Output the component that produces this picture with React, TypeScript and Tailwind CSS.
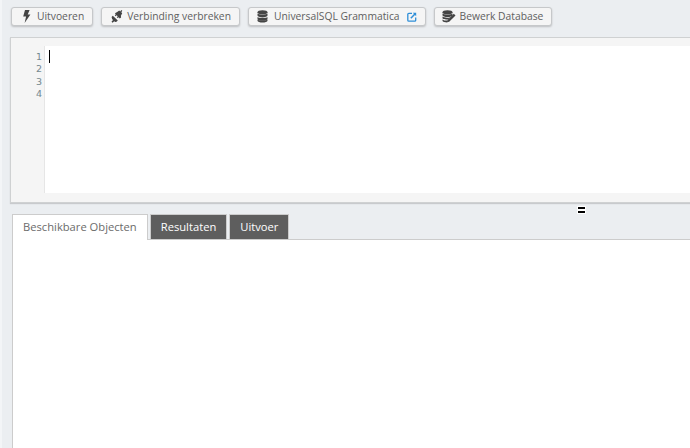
import type { ReactNode } from "react";

function BoltIcon() {
  return (
    <svg width="9" height="13" viewBox="0 0 9 13" fill="#444">
      <path d="M3 0h4.600L5.700 4.400H8.400L2.600 13l1.500-6.600H1.200z" />
    </svg>
  );
}

function UnplugIcon() {
  return (
    <svg width="15" height="15" viewBox="0 0 15 15" fill="#444">
      {/* upper plug */}
      <path d="M8.200 2.900l2-1.300 1.100.9.900-1.500 1.100.8-1 1.500.9 1-1.300 2.400.2 1.700-1.400 1.100-1-1.300-1 .9-.9-.9 1-1-1.200-1-1 1-.8-.9 1-1-.9-1z" />
      {/* lower plug */}
      <path d="M2.600 8l1.200-1.200 5 4.700-1.300 1.300-1.300.3-1-.9-1.600 1.500-1.100-1 1.500-1.600-.9-1z" />
    </svg>
  );
}

function DatabaseIcon() {
  return (
    <svg width="11" height="13" viewBox="0 0 11 13" fill="#444">
      <ellipse cx="5.500" cy="2.200" rx="5" ry="2" />
      <path d="M.5 3.600c1 1.300 9 1.300 10 0V5.600c0 2.400-10 2.400-10 0z" />
      <path d="M.5 7c1 1.300 9 1.300 10 0v2c0 2.400-10 2.400-10 0z" />
      <path d="M.5 9.600c1 1.300 9 1.300 10 0v1.200c0 2.400-10 2.400-10 0z" />
    </svg>
  );
}

function DatabaseEditIcon() {
  return (
    <svg width="14" height="13" viewBox="0 0 14 13" fill="#444">
      <ellipse cx="5.500" cy="2.200" rx="5" ry="2" />
      <path d="M.5 3.600c1 1.300 9 1.300 10 0v1.600c0 2.400-10 2.400-10 0z" />
      <path d="M.5 6.600c1 1.300 6 1.400 8 .6L6 9.600c-2.600 0-5.500-.4-5.500-1.500z" />
      <path d="M.5 9.400c1 1 3.500 1.200 5 1.100l-.3 2c-2.200 0-4.700-.5-4.700-1.700z" />
      <path d="M11.800 3.800l1.700 1.600-6.300 6.300-2.300.6.600-2.300z" />
    </svg>
  );
}

function ExternalIcon() {
  return (
    <svg width="10" height="10" viewBox="0 0 10 10" fill="none" stroke="#2f8fd8" strokeWidth="1.300">
      <path d="M5 1.300H1.800a1 1 0 0 0-1 1v5.900a1 1 0 0 0 1 1h5.900a1 1 0 0 0 1-1V5.500" />
      <path d="M3.800 6.200l4.400-4.400" strokeWidth="1.500" />
      <path d="M5.800.8h3.400v3.400z" fill="#2f8fd8" stroke="none" />
    </svg>
  );
}

function ToolButton({ icon, label, extra }: { icon: ReactNode; label: string; extra?: ReactNode }) {
  return (
    <button className="flex h-[19px] items-center rounded-[3px] border border-[#c6c8ca] bg-[#f5f5f5] pl-[3px] pr-[8px] text-[10.3px] text-[#606060] shadow-[0_1px_2px_rgba(0,0,0,0.2)]">
      <span className="flex w-[22px] justify-center">{icon}</span>
      <span>{label}</span>
      {extra}
    </button>
  );
}

export default function App() {
  return (
    <div className="flex h-[448px] w-[690px] flex-col overflow-hidden border-l-2 border-[#f3f5f7] bg-[#ebeef1] font-['Open_Sans',sans-serif]">
      {/* Toolbar */}
      <div className="flex gap-[8px] pl-[9px] pt-[7px]">
        <ToolButton icon={<BoltIcon />} label="Uitvoeren" />
        <ToolButton icon={<UnplugIcon />} label="Verbinding verbreken" />
        <ToolButton
          icon={<DatabaseIcon />}
          label="UniversalSQL Grammatica"
          extra={<span className="ml-[7px]"><ExternalIcon /></span>}
        />
        <ToolButton icon={<DatabaseEditIcon />} label="Bewerk Database" />
      </div>

      {/* Editor */}
      <div className="ml-[8px] mt-[11px] h-[166px] border-y border-l border-[#cfd1d2] bg-[#f5f5f5] pt-[8px] shadow-[0_1px_1px_rgba(0,0,0,0.15)]">
        <div className="flex h-[147px] bg-white">
          <div className="w-[34px] border-r border-[#e6e6e6] bg-[#f5f5f5] pr-[2px] text-right font-['DejaVu_Sans',sans-serif] text-[9.5px] leading-[12.4px] text-[#74888f]">
            <div className="pt-[5px]">1</div>
            <div>2</div>
            <div>3</div>
            <div>4</div>
          </div>
          <div className="ml-[4px] mt-[4px] h-[13px] w-px bg-black" />
        </div>
      </div>

      {/* Splitter */}
      <div className="flex h-[3px] justify-end">
        <span className="mr-[105px] mt-[4px] h-[6px] w-[7px] border-y-2 border-black bg-white shadow-[0_0_0_1px_#fff]" />
      </div>

      {/* Tabs */}
      <div className="ml-[10px] mt-[8px] flex gap-[2px] border-b border-[#ccc] text-[11.2px]">
        <div className="-mb-px flex h-[26px] items-center border border-b-0 border-[#ccc] bg-white px-[10px] text-[#6b6b6b]">
          Beschikbare Objecten
        </div>
        <div className="flex h-[25px] items-center border border-b-0 border-[#ccc] bg-[#5e5e5e] px-[10px] font-medium text-white">Resultaten</div>
        <div className="flex h-[25px] items-center border border-b-0 border-[#ccc] bg-[#5e5e5e] px-[10px] font-medium text-white">Uitvoer</div>
      </div>
      <div className="ml-[10px] flex-1 border-l border-[#ccc] bg-white" />
    </div>
  );
}
